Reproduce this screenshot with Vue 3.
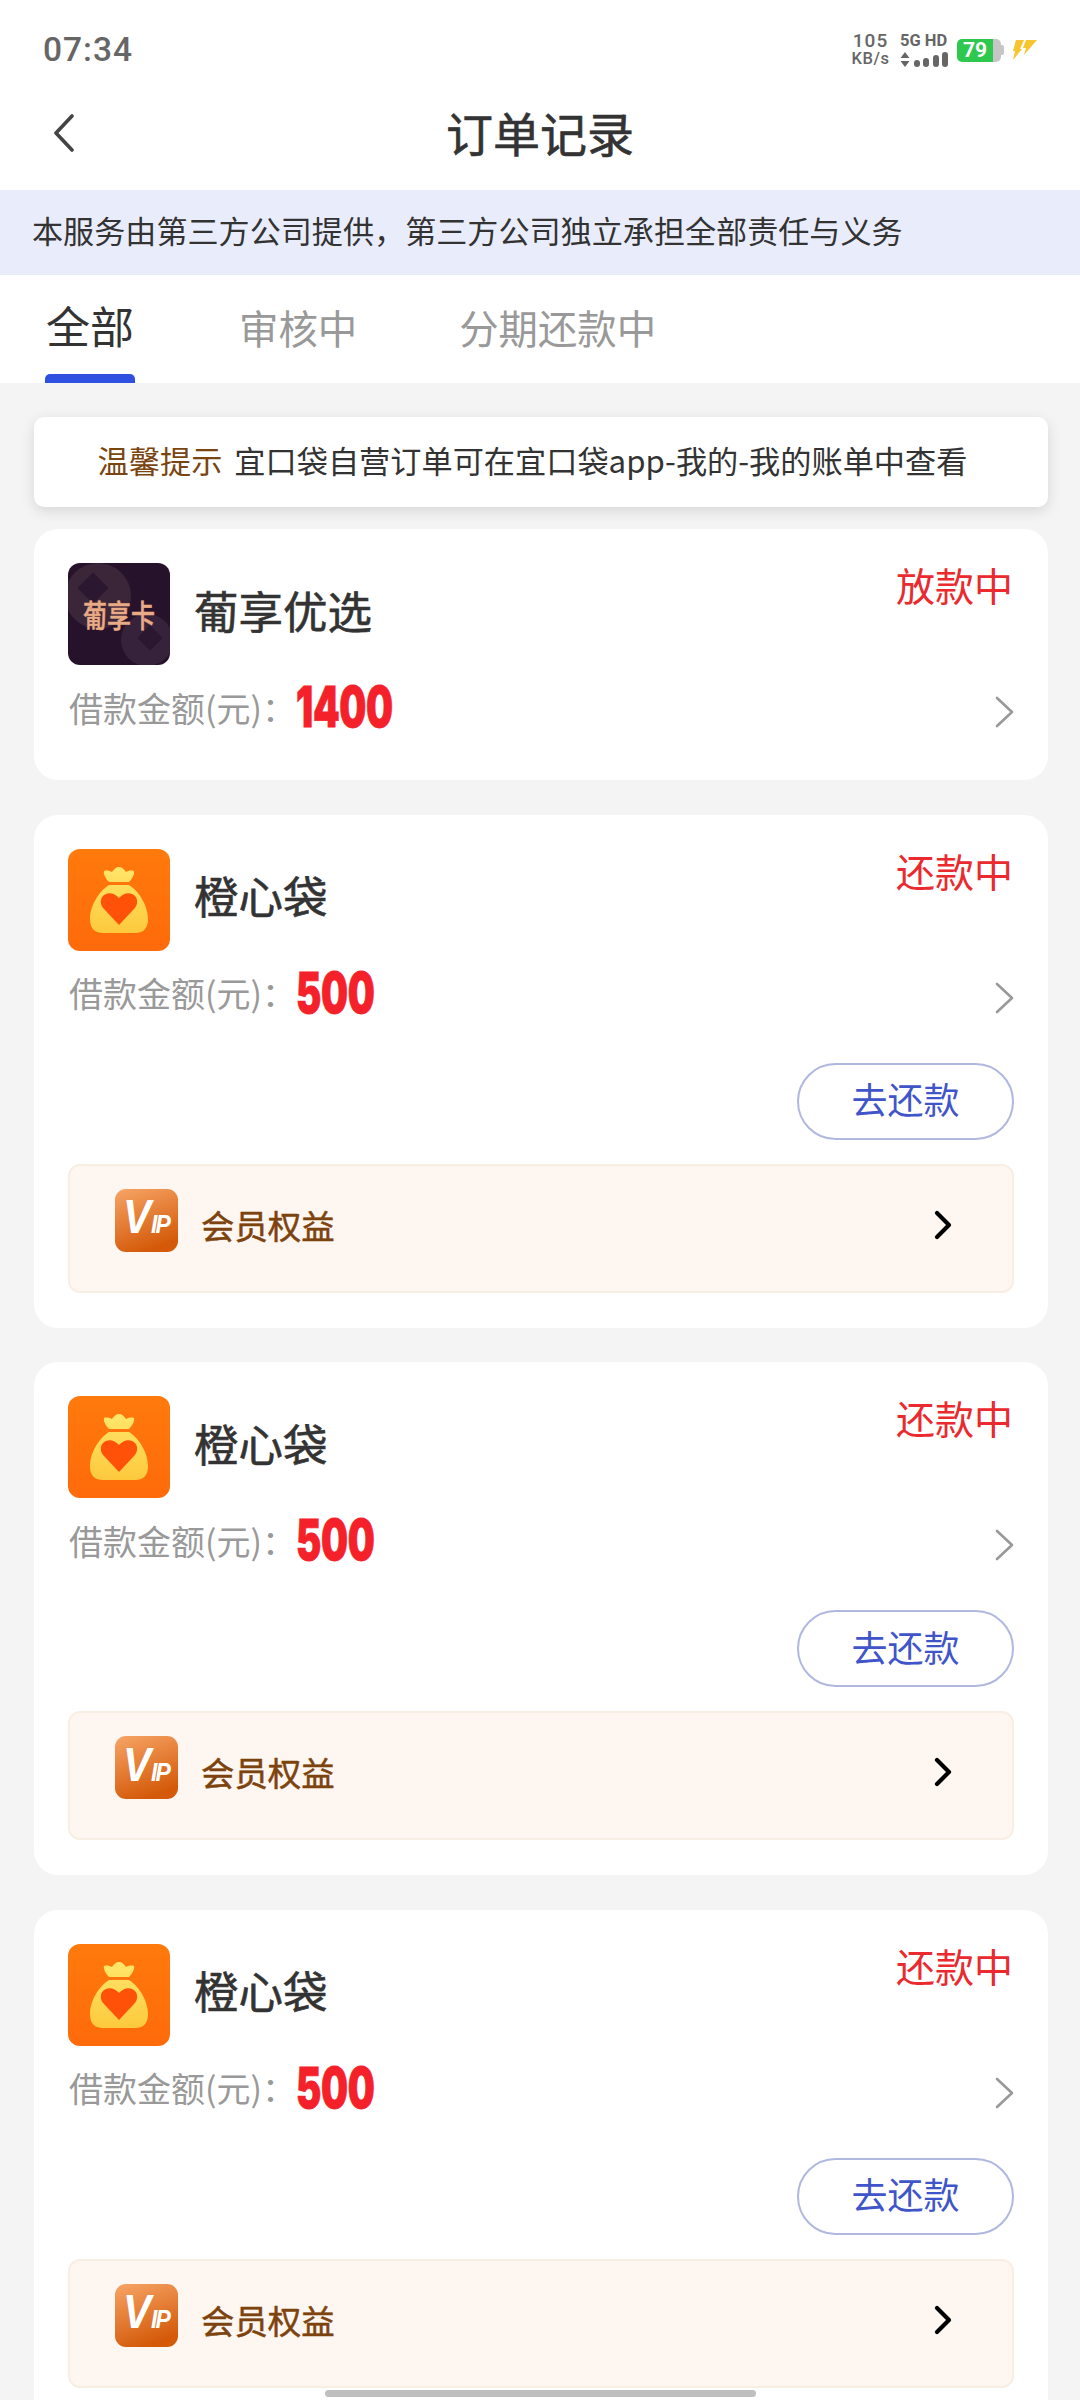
<script setup>
const cards = [
  { id: 1, kind: 'card', name: '葡享优选', status: '放款中', amount: '1400', repay: false },
  { id: 2, kind: 'bag', name: '橙心袋', status: '还款中', amount: '500', repay: true },
  { id: 3, kind: 'bag', name: '橙心袋', status: '还款中', amount: '500', repay: true },
  { id: 4, kind: 'bag', name: '橙心袋', status: '还款中', amount: '500', repay: true }
]
const signal = [7, 9, 12, 15]
</script>

<template>
  <div class="page">
    <header class="status-bar">
      <span class="time">07:34</span>
      <div class="sys">
        <div class="speed"><span>105</span><span>KB/s</span></div>
        <div class="net">
          <span class="net-label">5G HD</span>
          <div class="signal">
            <svg class="updown" width="10" height="15" viewBox="0 0 10 15"><path d="M5 0l4.500 6H.5zM5 15L.5 9h9z" fill="#666" /></svg>
            <i v-for="h in signal" :key="h" :style="{ height: h + 'px' }"></i>
          </div>
        </div>
        <div class="battery"><div class="battery-fill">79</div><div class="battery-rest"></div><div class="battery-cap"></div></div>
        <svg class="bolt" width="26" height="22" viewBox="0 0 26 22"><path d="M4 1h8L8 10h2L1 21l2-9H1zM14 1h11L12 16l2-7h-3z" fill="#f7c52e" /></svg>
      </div>
    </header>

    <nav class="nav">
      <svg class="back" width="24" height="38" viewBox="0 0 24 38"><path d="M20 2L4 19l16 17" fill="none" stroke="#444" stroke-width="3.6" stroke-linecap="round" stroke-linejoin="round" /></svg>
      <h1 class="title">订单记录</h1>
    </nav>

    <div class="notice">本服务由第三方公司提供，第三方公司独立承担全部责任与义务</div>

    <div class="tabs">
      <div class="tab tab-active"><span>全部</span><i class="indicator"></i></div>
      <div class="tab"><span>审核中</span></div>
      <div class="tab"><span>分期还款中</span></div>
    </div>

    <main class="content">
      <div class="tip"><span class="tip-label">温馨提示</span><span class="tip-text">宜口袋自营订单可在宜口袋app-我的-我的账单中查看</span></div>

      <section v-for="c in cards" :key="c.id" class="card" :class="{ 'card-plain': !c.repay }">
        <div class="head">
          <div class="brand">
            <div v-if="c.kind === 'card'" class="logo logo-card">
              <i class="disc disc-a"></i><i class="disc disc-b"></i>
              <i class="gem gem-a"></i><i class="gem gem-b"></i>
              <span class="logo-text">葡享卡</span>
            </div>
            <div v-else class="logo logo-bag">
              <svg width="102" height="102" viewBox="0 0 102 102">
                <defs><linearGradient :id="'bag' + c.id" x1="0" y1="0" x2="0" y2="1"><stop offset="0" stop-color="#ffe66a" /><stop offset="1" stop-color="#fdc93c" /></linearGradient></defs>
                <path :fill="'url(#bag' + c.id + ')'" d="M36 22c3-1 6 0 8 1 2-3 4-5 7-5s5 2 7 5c2-1 5-2 8-1 1 3-2 8-5 11H41c-3-3-6-8-5-11zM41 36h20c10 6 19 21 19 34 0 10-5 14-13 14H35c-8 0-13-4-13-14 0-13 9-28 19-34z" />
                <path fill="#ff5208" d="M51 76L36 60c-4-4-4-10-1-13 4-4 11-4 16 2 5-6 12-6 16-2 3 3 3 9-1 13z" />
              </svg>
            </div>
            <h2 class="name">{{ c.name }}</h2>
          </div>
          <span class="state">{{ c.status }}</span>
        </div>

        <div class="amount-row">
          <span class="amount-label">借款金额(元)：</span>
          <span class="amount">{{ c.amount }}</span>
          <svg class="row-arrow" width="22" height="32" viewBox="0 0 22 32"><path d="M3 2l15 14L3 30" fill="none" stroke="#999" stroke-width="2.6" stroke-linecap="round" stroke-linejoin="round" /></svg>
        </div>

        <template v-if="c.repay">
          <div class="actions"><button class="repay">去还款</button></div>
          <div class="vip">
            <div class="vip-logo"><span class="vip-mark">V<small>IP</small></span></div>
            <span class="vip-text">会员权益</span>
            <svg class="vip-arrow" width="20" height="30" viewBox="0 0 20 30"><path d="M4 3l12 12L4 27" fill="none" stroke="#000" stroke-width="4.2" stroke-linecap="round" stroke-linejoin="round" /></svg>
          </div>
        </template>
      </section>
    </main>

    <div class="home-bar"></div>
  </div>
</template>

<style>
html, body { margin: 0; background: #f4f4f4; }
</style>

<style scoped>
.page {
  position: relative;
  width: 1080px;
  height: 2400px;
  overflow: hidden;
  background: #f4f4f4;
  font-family: "Noto Sans CJK SC", "Noto Sans", sans-serif;
  color: #333;
}
.status-bar {
  height: 84px;
  box-sizing: border-box;
  padding: 16px 42px 0 43px;
  background: #fff;
  display: flex;
  align-items: center;
  justify-content: space-between;
}
.time {
  font: 500 33.5px/1 Roboto, sans-serif;
  letter-spacing: 1px;
  color: #666;
}
.sys { display: flex; align-items: center; color: #666; font-family: Roboto, sans-serif; }
.speed { display: flex; flex-direction: column; align-items: center; font-size: 16.500px; line-height: 18px; font-weight: 500; letter-spacing: .6px; width: 37px; white-space: nowrap; }
.speed span:first-child { font-size: 19px; letter-spacing: 1px; }
.net { margin-left: 11px; display: flex; flex-direction: column; width: 48px; gap: 5px; }
.net-label { font-size: 16.5px; font-weight: 700; line-height: 13px; white-space: nowrap; }
.signal { display: flex; align-items: flex-end; justify-content: space-between; height: 15px; }
.signal i { width: 6px; background: #666; border-radius: 3px; }
.battery { margin-left: 9px; display: flex; align-items: center; }
.battery-fill { width: 36px; height: 23px; background: #2fc84f; color: #fff; font: 700 21px/23px Roboto, sans-serif; text-align: center; border-radius: 5px 0 0 5px; }
.battery-rest { width: 8px; height: 23px; background: #c6c6c6; border-radius: 0 5px 5px 0; }
.battery-cap { width: 3px; height: 10px; background: #c6c6c6; border-radius: 0 2px 2px 0; }
.bolt { margin-left: 8px; }

.nav {
  position: relative;
  height: 106px;
  background: #fff;
  display: flex;
  align-items: center;
  justify-content: center;
}
.back { position: absolute; left: 52px; top: 30px; }
.title { margin: 0; font-size: 47px; font-weight: 400; -webkit-text-stroke: .6px #333; color: #333; line-height: 1; position: relative; top: -6px; }

.notice {
  height: 85px;
  box-sizing: border-box;
  padding-left: 32px;
  background: #e9edfb;
  font-size: 31.1px;
  line-height: 80px;
  color: #333;
  white-space: nowrap;
}

.tabs {
  height: 108px;
  background: #fff;
  display: flex;
  padding-left: 45px;
}
.tab {
  display: flex;
  flex-direction: column;
  font-size: 39.4px;
  color: #999;
  line-height: 1;
  padding-top: 32px;
  margin-right: 102px;
  box-sizing: border-box;
  white-space: nowrap;
}
.tab-active { width: 90px; margin-right: 104px; color: #333; font-size: 44px; padding-top: 28px; align-items: center; }
.indicator { display: block; width: 90px; height: 9px; margin-top: auto; background: #2f50e0; border-radius: 5px 5px 0 0; }

.content { padding: 34px 32px 0 34px; display: flex; flex-direction: column; }
.tip {
  height: 90px;
  margin-bottom: 22px;
  background: #fff;
  border-radius: 10px;
  box-shadow: 0 4px 14px rgba(0, 0, 0, .12);
  display: flex;
  align-items: center;
  justify-content: center;
  font-size: 31.2px;
  line-height: 84px;
  padding: 0 17px 5px 0;
  box-sizing: border-box;
  white-space: nowrap;
}
.tip-label { color: #7a4510; margin-right: 12px; }
.tip-text { color: #333; }

.card {
  background: #fff;
  border-radius: 24px;
  padding: 34px 34px 35px 34px;
  margin-bottom: 34.5px;
  flex-shrink: 0;
}
.card-plain { padding-bottom: 43px; }
.head { display: flex; justify-content: space-between; align-items: flex-start; }
.brand { display: flex; align-items: center; }
.logo { position: relative; width: 102px; height: 102px; border-radius: 12px; overflow: hidden; flex-shrink: 0; }
.logo-bag { background: linear-gradient(180deg, #ff7a0c, #ff6a0a); }
.logo-bag svg { display: block; }
.logo-card { background: #27122c; display: flex; align-items: center; justify-content: center; }
.disc { position: absolute; border-radius: 50%; background: #3b2538; }
.disc-a { width: 66px; height: 66px; left: -3px; top: 0; }
.disc-b { width: 52px; height: 52px; left: 53px; top: 51px; background: #36223a; }
.gem { position: absolute; width: 22px; height: 22px; background: #2b1730; transform: rotate(45deg); }
.gem-a { left: 14px; top: 14px; }
.gem-b { left: 73px; top: 66px; width: 18px; height: 18px; }
.logo-text { position: relative; font-size: 24px; font-weight: 500; color: #e8ab85; -webkit-text-stroke: .4px #e8ab85; white-space: nowrap; line-height: 1; transform: scaleY(1.3); }
.name { margin: -8px 0 0 24px; font-size: 44.5px; font-weight: 400; -webkit-text-stroke: .6px #333; color: #333; line-height: 1; }
.state { font-size: 39px; color: #ea2a2f; line-height: 44px; margin: -1px 1px 0 0; white-space: nowrap; }

.amount-row { display: flex; align-items: center; height: 60px; margin-top: 12px; position: relative; }
.amount-label { font-size: 34px; color: #999; white-space: nowrap; width: 227px; margin-left: 1px; }
.amount {
  font: 900 56px/60px Inter, sans-serif;
  color: #f5212a;
  transform: scaleX(.68);
  transform-origin: left center;
  -webkit-text-stroke: .8px #f5212a;
  letter-spacing: -.5px;
}
.row-arrow { position: absolute; right: -2px; top: 19px; }

.actions { display: flex; justify-content: flex-end; margin-top: 40px; }
.repay {
  width: 217px;
  height: 77px;
  padding: 0 0 6px;
  background: #fff;
  border: 2px solid #b0b8df;
  border-radius: 39px;
  color: #3f55c9;
  font-family: inherit;
  font-size: 36px;
  line-height: 1;
}
.vip {
  position: relative;
  margin-top: 24px;
  height: 129px;
  box-sizing: border-box;
  padding: 0 0 8px 45px;
  background: #fef6f0;
  border: 2px solid #f9eee4;
  border-radius: 12px;
  display: flex;
  align-items: center;
}
.vip-logo {
  position: relative;
  width: 63px;
  height: 63px;
  border-radius: 11px;
  background: linear-gradient(160deg, #f7a566, #d45a0a 85%);
  margin-bottom: 8px;
  flex-shrink: 0;
  display: flex;
  align-items: center;
  overflow: hidden;
  box-sizing: border-box;
  padding-left: 8px;
}
.vip-mark {
  color: #fff;
  font: italic 700 42px/63px "Liberation Sans", sans-serif;
  white-space: nowrap;
  transform: scaleY(1.15);
}
.vip-mark small { font-size: 23px; letter-spacing: -2px; }
.vip-text { margin-left: 23px; font-size: 33.4px; font-weight: 400; -webkit-text-stroke: .5px #7d430e; color: #7d430e; white-space: nowrap; }
.vip-arrow { position: absolute; right: 59px; top: 44px; }

.home-bar {
  position: absolute;
  left: 325px;
  top: 2390px;
  width: 431px;
  height: 7px;
  background: #bfbfbf;
  border-radius: 4px;
}
</style>
